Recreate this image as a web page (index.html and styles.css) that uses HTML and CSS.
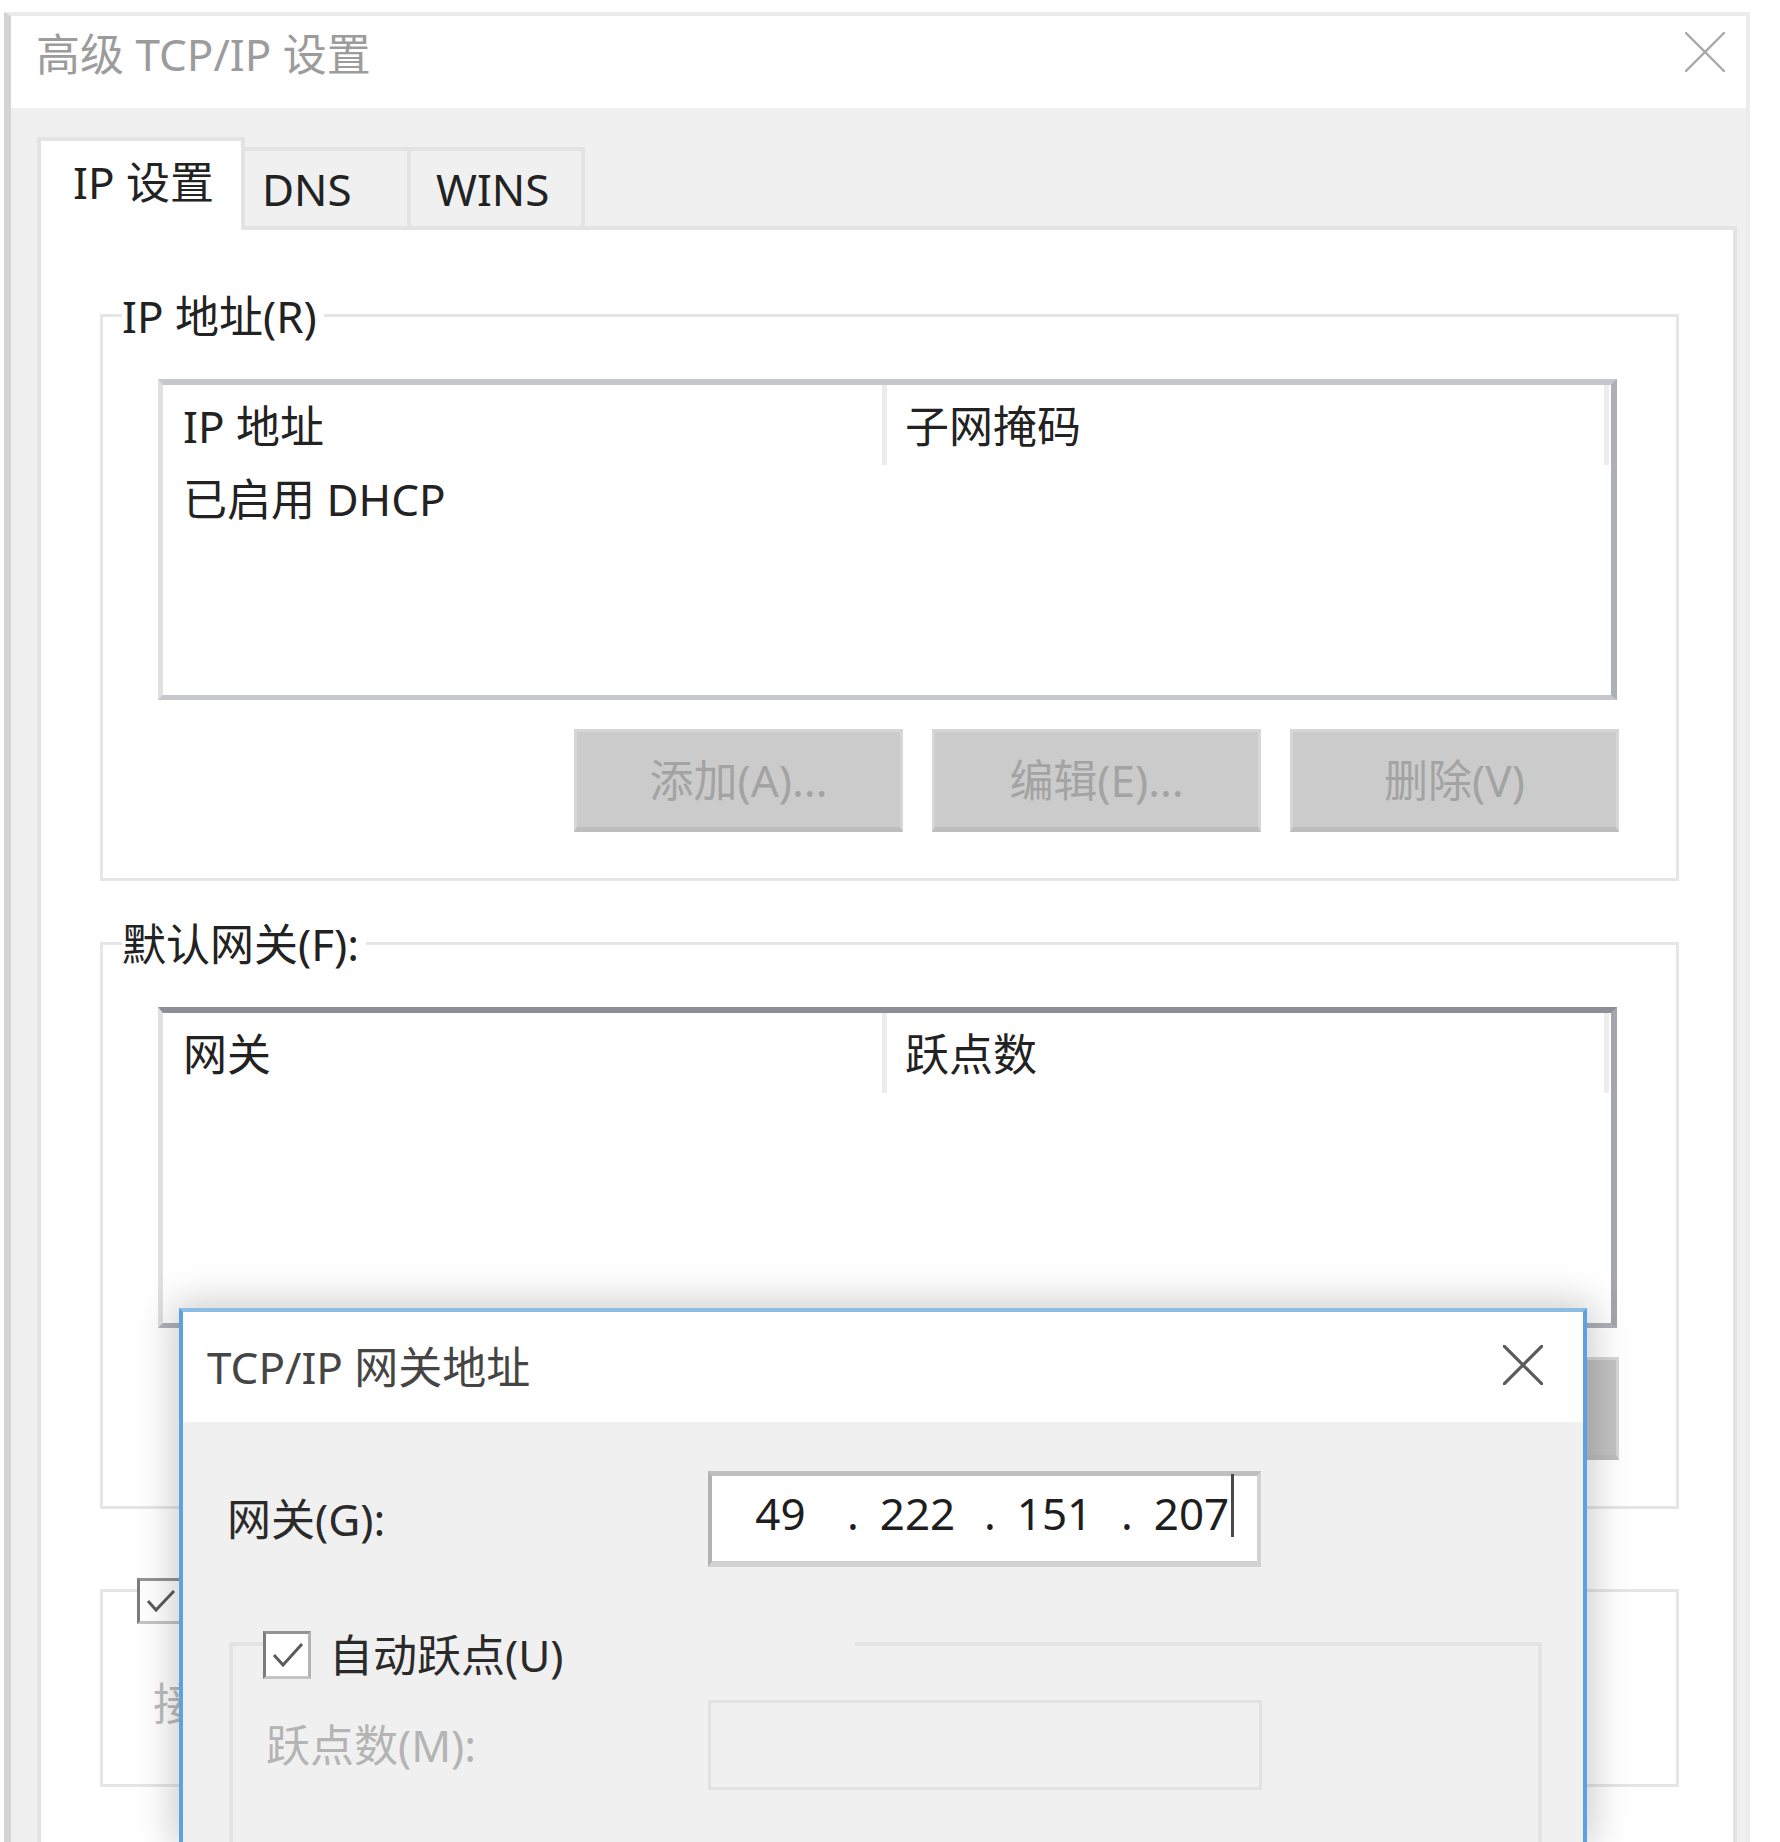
FILE: index.html
```html
<!DOCTYPE html>
<html lang="zh-CN">
<head>
<meta charset="utf-8">
<title>高级 TCP/IP 设置</title>
<link rel="stylesheet" href="styles.css">
</head>
<body>
<div class="dialog">
  <div class="titlebar">
    <span class="title">高级 TCP/IP 设置</span>
    <svg class="close close-main" width="40" height="40" viewBox="0 0 40 40"><path d="M1 1L39 39M39 1L1 39"/></svg>
  </div>
  <div class="dlg-body">
    <div class="tabs">
      <div class="tab active">IP 设置</div>
      <div class="tab dns">DNS</div>
      <div class="tab wins">WINS</div>
    </div>
    <div class="panel">
      <div class="group">
        <div class="group-label">IP 地址(R)</div>
        <div class="listbox">
          <div class="lb-head">
            <div class="lb-col c1">IP 地址</div>
            <div class="lb-col c2">子网掩码</div>
          </div>
          <div class="lb-row">已启用 DHCP</div>
        </div>
        <div class="buttons">
          <button class="btn" disabled>添加(A)...</button>
          <button class="btn" disabled>编辑(E)...</button>
          <button class="btn" disabled>删除(V)</button>
        </div>
      </div>
      <div class="group g2">
        <div class="group-label">默认网关(F):</div>
        <div class="listbox focused">
          <div class="lb-head">
            <div class="lb-col c1">网关</div>
            <div class="lb-col c2">跃点数</div>
          </div>
        </div>
        <div class="buttons">
          <button class="btn hidden-btn" disabled></button>
          <button class="btn hidden-btn" disabled></button>
          <button class="btn hidden-btn" disabled></button>
        </div>
      </div>
      <div class="group g3">
        <div class="group-check">
          <span class="checkbox"><svg width="40" height="40" viewBox="0 0 40 40"><path d="M8 20L16 29L34 10"/></svg></span>
        </div>
        <div class="metric-main">接</div>
      </div>
    </div>
  </div>
</div>

<div class="popup">
  <div class="p-titlebar">
    <span class="p-title">TCP/IP 网关地址</span>
    <svg class="close close-popup" width="40" height="40" viewBox="0 0 40 40"><path d="M1 1L39 39M39 1L1 39"/></svg>
  </div>
  <div class="p-body">
    <div class="p-row">
      <span class="p-label">网关(G):</span>
      <div class="ipbox">
        <span class="ip-field">49</span><span class="ip-dot">.</span>
        <span class="ip-field">222</span><span class="ip-dot">.</span>
        <span class="ip-field">151</span><span class="ip-dot">.</span>
        <span class="ip-field"><span class="ip-last">207</span></span>
      </div>
    </div>
    <div class="p-group">
      <div class="p-check">
        <span class="checkbox big"><svg width="42" height="42" viewBox="0 0 42 42"><path d="M8 21L17 31L36 10"/></svg></span>
        <span class="check-text">自动跃点(U)</span>
      </div>
      <div class="p-row metric">
        <span class="p-label disabled">跃点数(M):</span>
        <div class="disabled-input"></div>
      </div>
    </div>
  </div>
</div>
</body>
</html>
```

FILE: styles.css
```css
html, body {
  margin: 0;
  padding: 0;
  background: #ffffff;
  overflow: hidden;
  width: 1780px;
  height: 1842px;
}

body {
  font-family: "Noto Sans", "Noto Sans CJK SC", sans-serif;
  font-size: 44px;
  line-height: 44px;
  color: #222222;
  position: relative;
}

.dialog {
  margin: 12px 0 0 4px;
  width: 1746px;
  height: 1830px;
  box-sizing: border-box;
  border-top: 4px solid #ececec;
  border-left: 7px solid #d4d4d4;
  border-right: 4px solid #ececec;
  background: #f0f0f0;
  overflow: hidden;
}

.titlebar {
  height: 92px;
  box-sizing: border-box;
  background: #ffffff;
  display: flex;
  justify-content: space-between;
  align-items: flex-start;
  padding: 16px 21px 0 25px;
}

.title {
  color: #9c9c9c;
  white-space: nowrap;
}

.close path {
  fill: none;
  stroke-linecap: square;
}

.close-main path {
  stroke: #a9a9a9;
  stroke-width: 2.4;
}

.close-popup path {
  stroke: #5a5a5a;
  stroke-width: 3.2;
}

.dlg-body {
  padding: 29px 0 0 26px;
}

.tabs {
  display: flex;
  align-items: flex-end;
}

.tab {
  box-sizing: border-box;
  white-space: nowrap;
  color: #222222;
}

.tab.active {
  width: 208px;
  height: 93px;
  border: 4px solid #e3e3e3;
  border-bottom: 0;
  background: #ffffff;
  margin-bottom: -4px;
  position: relative;
  z-index: 1;
  padding: 19px 0 0 32px;
}

.tab.dns {
  width: 166px;
  height: 79px;
  border-top: 4px solid #e3e3e3;
  border-right: 4px solid #e3e3e3;
  padding: 16px 0 0 17px;
}

.tab.wins {
  width: 174px;
  height: 79px;
  border-top: 4px solid #e3e3e3;
  border-right: 4px solid #e3e3e3;
  padding: 16px 0 0 25px;
}

.panel {
  width: 1700px;
  height: 1616px;
  box-sizing: border-box;
  border: 4px solid #e3e3e3;
  border-bottom: 0;
  background: #ffffff;
  padding: 84px 0 0 59px;
}

.group {
  width: 1579px;
  box-sizing: border-box;
  border: 3px solid #e6e6e6;
}

.group.g2 {
  margin-top: 61px;
}

.group.g3 {
  margin-top: 80px;
  height: 198px;
}

.group-label {
  width: fit-content;
  margin: -23px 0 0 19px;
  padding: 0 7px 0 0;
  background: #ffffff;
  white-space: nowrap;
}

.listbox {
  margin: 41px 0 0 55px;
  width: 1459px;
  height: 321px;
  box-sizing: border-box;
  border-style: solid;
  border-width: 6px 6px 5px 5px;
  border-color: #c5c7cc #abafb6 #c5c7cc #e0e0e0;
  background: #ffffff;
}

.listbox.focused {
  border-top-color: #8c9096;
  border-right-color: #a2a6ad;
  border-bottom-color: #aeb2b8;
}

.lb-head {
  display: flex;
  height: 80px;
}

.lb-col {
  box-sizing: border-box;
  border-right: 5px solid #ececec;
  padding: 19px 0 0 20px;
  white-space: nowrap;
}

.lb-col.c1 {
  width: 724px;
}

.lb-col.c2 {
  width: 722px;
  padding-left: 18px;
}

.lb-row {
  padding: 12px 0 0 20px;
  white-space: nowrap;
}

.buttons {
  display: flex;
  justify-content: flex-end;
  gap: 29px;
  margin: 29px 57px 0 0;
  padding-bottom: 46px;
}

.btn {
  width: 329px;
  height: 103px;
  box-sizing: border-box;
  border: 3px solid #d6d6d6;
  border-bottom: 5px solid #bdbdbd;
  background: #cbcbcb;
  color: #a3a3a3;
  font: inherit;
  padding: 0;
  white-space: nowrap;
}

.btn.hidden-btn {
  background: #c2c2c2;
}

.group-check {
  display: flex;
  align-items: center;
  width: fit-content;
  margin: -14px 0 0 34px;
  padding-right: 12px;
  background: #ffffff;
}

.checkbox {
  width: 46px;
  height: 46px;
  box-sizing: border-box;
  border: 3px solid;
  border-color: #939393 #b4b4b4 #c4c4c4 #7c7c7c;
  background: #ffffff;
  display: flex;
  flex: none;
}

.checkbox.big {
  width: 48px;
  height: 48px;
}

.checkbox path {
  fill: none;
  stroke: #5c5c5c;
  stroke-width: 3;
}

.check-text {
  white-space: nowrap;
  color: #2a2a2a;
}

.metric-main {
  margin: 57px 0 0 50px;
  color: #bdbdbd;
  white-space: nowrap;
}

/* popup window */
.popup {
  position: absolute;
  left: 179px;
  top: 1308px;
  width: 1408px;
  height: 534px;
  box-sizing: border-box;
  border: 4px solid #5aa2e0;
  border-top-color: #8dbde4;
  border-bottom: 0;
  background: #f0f0f0;
  box-shadow: 0 0 36px 6px rgba(0, 0, 0, 0.2);
  z-index: 5;
  overflow: hidden;
}

.p-titlebar {
  height: 110px;
  box-sizing: border-box;
  background: #ffffff;
  display: flex;
  justify-content: space-between;
  align-items: flex-start;
  padding: 33px 40px 0 24px;
}

.p-title {
  color: #454545;
  white-space: nowrap;
}

.p-body {
  padding: 49px 0 0 44px;
}

.p-row {
  display: flex;
  align-items: center;
}

.p-label {
  width: 481px;
  flex: none;
  white-space: nowrap;
  color: #2a2a2a;
}

.ipbox {
  width: 553px;
  height: 96px;
  box-sizing: border-box;
  border-style: solid;
  border-width: 5px 4px 6px 4px;
  border-color: #bfbfbf #d2d2d2 #d2d2d2 #b2b2b2;
  background: #ffffff;
  display: flex;
  align-items: flex-start;
  padding: 15px 0 0 13px;
  color: #1e1e1e;
}

.ip-field {
  width: 111px;
  flex: none;
  text-align: center;
}

.ip-dot {
  width: 26px;
  flex: none;
  box-sizing: border-box;
  padding-left: 8px;
  text-align: center;
}

.ip-last {
  position: relative;
}

.ip-last::after {
  content: "";
  position: absolute;
  left: calc(100% + 2px);
  top: -9px;
  width: 3px;
  height: 63px;
  background: #4a4a4a;
}

.p-group {
  margin: 75px 0 0 2px;
  width: 1313px;
  height: 200px;
  box-sizing: border-box;
  border: 4px solid #e3e3e3;
  border-bottom: 0;
}

.p-check {
  display: flex;
  align-items: center;
  gap: 18px;
  width: 592px;
  margin: -15px 0 0 30px;
  background: #f0f0f0;
}

.p-row.metric {
  margin: 21px 0 0 33px;
}

.p-label.disabled {
  width: 442px;
  color: #b4b4b4;
}

.disabled-input {
  width: 554px;
  height: 90px;
  box-sizing: border-box;
  border: 3px solid #e2e2e2;
  background: #f0f0f0;
}
```
